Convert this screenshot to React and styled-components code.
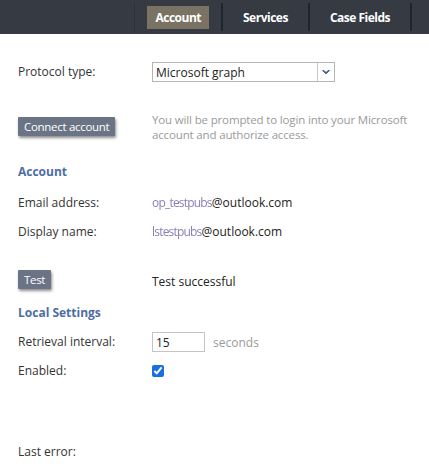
import styled, { createGlobalStyle } from 'styled-components';

const GlobalStyle = createGlobalStyle`
  html, body {
    margin: 0;
    padding: 0;
    background: #ffffff;
  }
  body {
    font-family: "Open Sans", "Noto Sans", sans-serif;
    font-size: 12px;
    color: #333333;
  }
`;

const TopBar = styled.div`
  height: 34px;
  background: #353a43;
  display: flex;
  justify-content: flex-end;
  align-items: stretch;
  padding-right: 17px;
`;

const Tab = styled.div`
  display: flex;
  align-items: center;
  padding: 0 12px;
  border-right: 2px solid #20242b;
  margin: 3px 0;
  &:first-child {
    border-left: 1px solid #2c3038;
  }
`;

const TabLabel = styled.span`
  display: flex;
  align-items: center;
  height: 23px;
  padding: 0 8px;
  background: ${p => (p.active ? '#7a7262' : 'transparent')};
  color: #ffffff;
  font-weight: 700;
  font-size: 12px;
  letter-spacing: -0.5px;
  cursor: pointer;
`;

const Content = styled.div`
  padding: 0 18px;
`;

const Row = styled.div`
  display: grid;
  grid-template-columns: 134px 1fr;
  align-items: ${p => p.align || 'center'};
  min-height: 20px;
  margin-top: ${p => p.top || 0}px;
`;

const Label = styled.span`
  line-height: 20px;
  color: #333333;
`;

const Heading = styled.div`
  margin-top: ${p => p.top || 0}px;
  color: #4d6ea5;
  font-weight: 700;
  line-height: 18px;
`;

const SelectBox = styled.div`
  width: 183px;
  height: 20px;
  box-sizing: border-box;
  border: 1px solid #b5b5b5;
  display: flex;
  align-items: center;
`;

const SelectValue = styled.span`
  flex: 1;
  padding-left: 3px;
  color: #222222;
`;

const SelectArrow = styled.span`
  width: 16px;
  height: 100%;
  border-left: 1px solid #c8c8c8;
  display: flex;
  align-items: center;
  justify-content: center;
`;

const Button = styled.button`
  margin-top: ${p => p.top || 0}px;
  justify-self: start;
  height: 19px;
  padding: 0 6px;
  border: none;
  border-radius: 1px;
  background: #6b7485;
  color: #ffffff;
  font-family: inherit;
  font-size: 11.5px;
  letter-spacing: -0.3px;
  box-shadow: 1px 2px 3px rgba(0, 0, 0, 0.45);
  cursor: pointer;
`;

const Hint = styled.p`
  margin: 0;
  color: #9a9a9a;
  font-size: 11.5px;
  line-height: 15px;
  letter-spacing: -0.15px;
`;

const Value = styled.span`
  line-height: 20px;
  color: #222222;
  margin-top: ${p => p.top || 0}px;
`;

const Masked = styled.span`
  color: #8a7fb8;
  filter: blur(0.6px);
  letter-spacing: -0.8px;
`;

const NumberInput = styled.input`
  width: 53px;
  height: 20px;
  box-sizing: border-box;
  border: 1px solid #c4c4c4;
  padding: 0 3px;
  font-family: inherit;
  font-size: 12px;
  color: #222222;
  outline: none;
`;

const Inline = styled.div`
  display: flex;
  align-items: center;
  gap: 8px;
`;

const Unit = styled.span`
  color: #9a9a9a;
`;

const Check = styled.input`
  margin: 0;
  width: 12px;
  height: 12px;
  accent-color: #1a6fe0;
`;

const App = () => {
  const tabs = ['Account', 'Services', 'Case Fields'];
  return (
    <>
      <GlobalStyle />
      <TopBar>
        {tabs.map(t => (
          <Tab key={t}>
            <TabLabel active={t === 'Account'}>{t}</TabLabel>
          </Tab>
        ))}
      </TopBar>
      <Content>
        <Row top={28}>
          <Label>Protocol type:</Label>
          <SelectBox>
            <SelectValue>Microsoft graph</SelectValue>
            <SelectArrow>
              <svg width="8" height="5" viewBox="0 0 8 5">
                <path d="M0.5 0.5 L4 4 L7.5 0.5 L6 0.5 L4 2.5 L2 0.5 Z" fill="#3f5a86" stroke="#3f5a86" strokeWidth="0.8" />
              </svg>
            </SelectArrow>
          </SelectBox>
        </Row>

        <Row top={30} align="start">
          <Button top={5}>Connect account</Button>
          <Hint>
            You will be prompted to login into your Microsoft
            <br />
            account and authorize access.
          </Hint>
        </Row>

        <Heading top={21}>Account</Heading>

        <Row top={12}>
          <Label>Email address:</Label>
          <Value><Masked>op_testpubs</Masked>@outlook.com</Value>
        </Row>
        <Row top={9}>
          <Label>Display name:</Label>
          <Value><Masked>lstestpubs</Masked>@outlook.com</Value>
        </Row>

        <Row top={28} align="start">
          <Button>Test</Button>
          <Value top={2}>Test successful</Value>
        </Row>

        <Heading top={12}>Local Settings</Heading>

        <Row top={10}>
          <Label>Retrieval interval:</Label>
          <Inline>
            <NumberInput defaultValue="15" />
            <Unit>seconds</Unit>
          </Inline>
        </Row>
        <Row top={9}>
          <Label>Enabled:</Label>
          <Inline>
            <Check type="checkbox" defaultChecked />
          </Inline>
        </Row>

        <Row top={61}>
          <Label>Last error:</Label>
        </Row>
      </Content>
    </>
  );
};

export default App;
